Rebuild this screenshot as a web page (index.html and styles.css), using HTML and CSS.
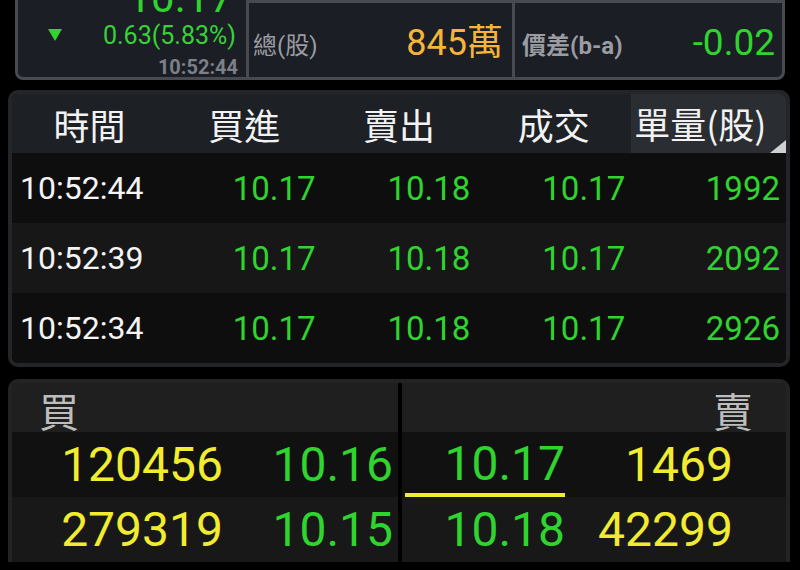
FILE: index.html
```html
<!DOCTYPE html>
<html lang="zh-Hant">
<head>
<meta charset="utf-8">
<title>報價</title>
<link rel="stylesheet" href="styles.css">
</head>
<body>
<div class="quote">
  <div class="last-cell">
    <div class="last-price">10.17</div>
    <div class="change-row">
      <svg class="down-arrow" width="14" height="12" viewBox="0 0 14 12"><polygon points="0,0 14,0 7,12" fill="#2fd42f"/></svg>
      <span class="change">0.63(5.83%)</span>
    </div>
    <div class="last-time">10:52:44</div>
  </div>
  <div class="stat-cell stat-volume">
    <span class="stat-label">總(股)</span>
    <span class="stat-value orange">845萬</span>
  </div>
  <div class="stat-cell stat-spread">
    <span class="stat-label bold">價差(b-a)</span>
    <span class="stat-value green big">-0.02</span>
  </div>
</div>

<div class="ticks">
  <div class="tick-head">
    <div class="th">時間</div>
    <div class="th">買進</div>
    <div class="th">賣出</div>
    <div class="th">成交</div>
    <div class="th th-sel">單量(股)</div>
  </div>
  <div class="tick-row odd">
    <div class="td time">10:52:44</div>
    <div class="td num">10.17</div>
    <div class="td num">10.18</div>
    <div class="td num">10.17</div>
    <div class="td num">1992</div>
  </div>
  <div class="tick-row even">
    <div class="td time">10:52:39</div>
    <div class="td num">10.17</div>
    <div class="td num">10.18</div>
    <div class="td num">10.17</div>
    <div class="td num">2092</div>
  </div>
  <div class="tick-row odd">
    <div class="td time">10:52:34</div>
    <div class="td num">10.17</div>
    <div class="td num">10.18</div>
    <div class="td num">10.17</div>
    <div class="td num">2926</div>
  </div>
</div>

<div class="book">
  <div class="half bid">
    <div class="book-head"><span class="side">買</span></div>
    <div class="book-row odd">
      <div class="bc qty col-a">120456</div>
      <div class="bc price col-b">10.16</div>
    </div>
    <div class="book-row even">
      <div class="bc qty col-a">279319</div>
      <div class="bc price col-b">10.15</div>
    </div>
  </div>
  <div class="divider"></div>
  <div class="half ask">
    <div class="book-head right"><span class="side">賣</span></div>
    <div class="book-row odd">
      <div class="bc price col-c"><div class="best">10.17</div></div>
      <div class="bc qty col-d">1469</div>
    </div>
    <div class="book-row even">
      <div class="bc price col-c">10.18</div>
      <div class="bc qty col-d">42299</div>
    </div>
  </div>
</div>
</body>
</html>
```

FILE: styles.css
```css
html, body {
  margin: 0;
  padding: 0;
}
body {
  background: #000;
  width: 800px;
  height: 570px;
  overflow: hidden;
  font-family: Roboto, "Noto Sans CJK TC", sans-serif;
}

/* ---------- top quote card ---------- */
.quote {
  margin: -40px 15px 0;
  height: 120px;
  box-sizing: border-box;
  border: 3px solid #474a50;
  border-radius: 8px;
  background: #1b1e24;
  display: grid;
  grid-template-columns: 228px 266px 270px;
}
.last-cell {
  display: flex;
  flex-direction: column;
  justify-content: flex-end;
  padding-right: 8px;
}
.last-price {
  font-size: 42px;
  line-height: 42px;
  color: #2fd42f;
  text-align: right;
  padding-right: 5px;
  margin-bottom: 4px;
}
.change-row {
  display: flex;
  align-items: center;
  justify-content: space-between;
  padding-left: 30px;
  margin-bottom: 8px;
  height: 26px;
}
.down-arrow {
  display: block;
  margin-top: -2px;
}
.change {
  font-size: 25px;
  line-height: 26px;
  color: #38d238;
  padding-right: 2px;
}
.last-time {
  font-size: 20px;
  line-height: 20px;
  font-weight: 700;
  color: #7c8087;
  text-align: right;
}
.stat-cell {
  align-self: end;
  height: 77px;
  box-sizing: border-box;
  border-left: 3px solid #474a50;
  border-top: 3px solid #474a50;
  display: flex;
  align-items: center;
  justify-content: space-between;
  padding-top: 6px;
}
.stat-volume {
  padding-left: 4px;
  padding-right: 9px;
}
.stat-spread {
  padding-left: 7px;
  padding-right: 7px;
}
.stat-label {
  font-size: 24px;
  color: #9a9ca1;
}
.stat-label.bold {
  font-weight: 700;
  font-size: 24px;
}
.stat-value {
  font-size: 36px;
  line-height: 40px;
}
.stat-value.big {
  font-size: 37px;
}
.orange { color: #f4b53a; }
.green { color: #2fd42f; }

/* ---------- tick list ---------- */
.ticks {
  margin: 10px 10px 0 8px;
  border: 4px solid #232528;
  border-radius: 10px;
  overflow: hidden;
  background: #0e0e0e;
}
.tick-head {
  display: grid;
  grid-template-columns: repeat(5, 1fr);
  height: 59px;
  background: #1d2024;
}
.th {
  display: flex;
  align-items: center;
  justify-content: center;
  font-family: "Noto Sans CJK TC", sans-serif;
  font-size: 36px;
  color: #f2f2f2;
}
.th-sel {
  position: relative;
  background: #2a2d31;
  justify-content: flex-start;
  padding-left: 3px;
  margin-top: -1px;
  white-space: nowrap;
}
.th-sel::after {
  content: "";
  position: absolute;
  right: 0;
  bottom: 0;
  width: 0;
  height: 0;
  border-style: solid;
  border-width: 0 0 13px 16px;
  border-color: transparent transparent #cfd0d2 transparent;
}
.tick-row {
  display: grid;
  grid-template-columns: repeat(5, 1fr);
  height: 70px;
}
.odd { background: #0e0e0e; }
.even { background: #171717; }
.td {
  display: flex;
  align-items: center;
  font-size: 33px;
}
.td.time {
  color: #f4f4f4;
  font-size: 32px;
  padding-left: 8px;
}
.td.num {
  color: #2fd42f;
  justify-content: flex-end;
  padding-right: 6px;
}

/* ---------- order book ---------- */
.book {
  margin: 12px 10px 0 8px;
  border: 4px solid #232323;
  border-bottom: 0;
  border-radius: 10px 10px 0 0;
  display: flex;
  background: #1a1a1a;
}
.half {
  display: flex;
  flex-direction: column;
}
.bid { width: 386px; }
.ask { width: 384px; }
.divider {
  width: 4px;
  background: #000;
}
.book-head {
  height: 49px;
  background: #1f1f1f;
  display: flex;
  align-items: center;
  padding: 4px 0 0 27px;
  box-sizing: border-box;
}
.book-head.right {
  justify-content: flex-end;
  padding: 4px 33px 0 0;
}
.side {
  font-family: "Noto Sans CJK TC", sans-serif;
  font-size: 40px;
  color: #bdbdbd;
}
.book-row {
  display: flex;
  height: 65px;
}
.book-row.odd { background: #111111; }
.book-row.even { background: #181818; }
.bc {
  display: flex;
  align-items: center;
  justify-content: flex-end;
  font-size: 48px;
  box-sizing: border-box;
}
.qty { color: #f2ec30; }
.price { color: #2fd42f; }
.col-a { width: 215px; padding-right: 4px; }
.col-b { width: 171px; padding-right: 5px; }
.col-c { width: 168px; padding-right: 5px; }
.col-d { width: 216px; padding-right: 53px; }
.best {
  height: 100%;
  width: calc(100% - 3px);
  box-sizing: border-box;
  border-bottom: 4px solid #f2ec30;
  display: flex;
  align-items: center;
  justify-content: flex-end;
  padding-top: 2px;
}
```
